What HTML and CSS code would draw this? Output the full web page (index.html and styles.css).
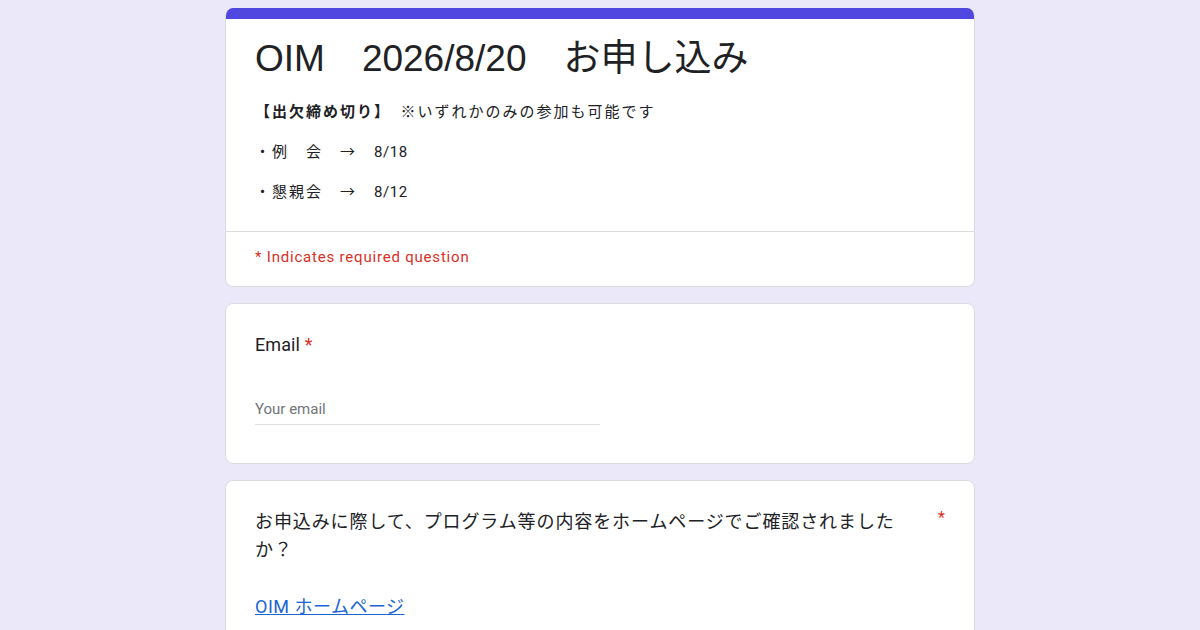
FILE: index.html
```html
<!DOCTYPE html>
<html lang="ja">
<head>
    <meta charset="UTF-8">
    <meta name="viewport" content="width=device-width, initial-scale=1.0">
    <title>OIM 2026/8/20 お申し込み</title>
    <link rel="stylesheet" href="styles.css">
</head>
<body>
    <div class="form-wrap">
        <div class="card header-card">
            <div class="accent-bar"></div>
            <div class="header-body">
                <h1 class="form-title">OIM　2026/8/20　お申し込み</h1>
                <div class="form-desc">
                    <p><strong>【出欠締め切り】</strong>　※いずれかのみの参加も可能です</p>
                    <p>・例　会　→　<span class="date">8/18</span></p>
                    <p>・懇親会　→　<span class="date">8/12</span></p>
                </div>
            </div>
            <div class="required-note">* Indicates required question</div>
        </div>

        <div class="card question-card">
            <div class="question-title">Email <span class="req">*</span></div>
            <input type="email" class="text-input" placeholder="Your email">
        </div>

        <div class="card question-card">
            <div class="question-row">
                <div class="question-title jp">お申込みに際して、プログラム等の内容をホームページでご確認されましたか？</div>
                <span class="req">*</span>
            </div>
            <a href="#" class="question-link">OIM ホームページ</a>
        </div>
    </div>
</body>
</html>
```

FILE: styles.css
```css
/* base */
body {
    background-color: #ebe9f9;
    font-family: Roboto, "Noto Sans CJK JP", sans-serif;
    color: #202124;
    margin: 0;
    padding: 8px 0 0;
}
.form-wrap {
    width: 750px;
    margin: 0 auto;
    display: flex;
    flex-direction: column;
    gap: 16px;
}
.card {
    background-color: #fff;
    border: 1px solid #dadce0;
    border-radius: 8px;
    overflow: hidden;
}

/* header card */
.header-card {
    border-top: none;
}
.accent-bar {
    height: 11px;
    background-color: #5046e0;
    margin: 0 -1px;
}
.header-body {
    padding: 16px 29px 27px;
    border-bottom: 1px solid #dadce0;
}
.form-title {
    font-family: "Liberation Sans", Arial, "Noto Sans CJK JP", sans-serif;
    font-size: 37px;
    font-weight: 400;
    line-height: 48px;
    margin: 0 0 18px;
}
.form-desc {
    font-size: 15px;
    letter-spacing: 2px;
    color: #202124;
}
.form-desc p {
    margin: 0 0 17px;
    line-height: 23px;
}
.form-desc p:last-child {
    margin-bottom: 0;
}
.form-desc strong {
    font-weight: 700;
}
.form-desc .date {
    letter-spacing: 0.6px;
}
.required-note {
    color: #d93025;
    font-size: 15px;
    letter-spacing: 0.8px;
    padding: 16px 29px 20px;
}

/* question cards */
.question-card {
    padding: 27px 29px 38px;
}
.question-title {
    font-size: 18px;
    line-height: 28px;
    letter-spacing: 0.1px;
}
.question-title.jp {
    width: 660px;
    letter-spacing: 0.9px;
}
.req {
    color: #d93025;
}
.question-row {
    display: flex;
    justify-content: space-between;
}
.text-input {
    display: block;
    width: 345px;
    margin-top: 33px;
    padding: 8px 0 6px;
    border: none;
    border-bottom: 1px solid #e0e0e0;
    font-family: Roboto, sans-serif;
    font-size: 15px;
    outline: none;
}
.text-input::placeholder {
    color: #70757a;
}
.question-link {
    display: inline-block;
    margin-top: 28px;
    color: #1a64d6;
    font-size: 18px;
    letter-spacing: 0.5px;
}
```
